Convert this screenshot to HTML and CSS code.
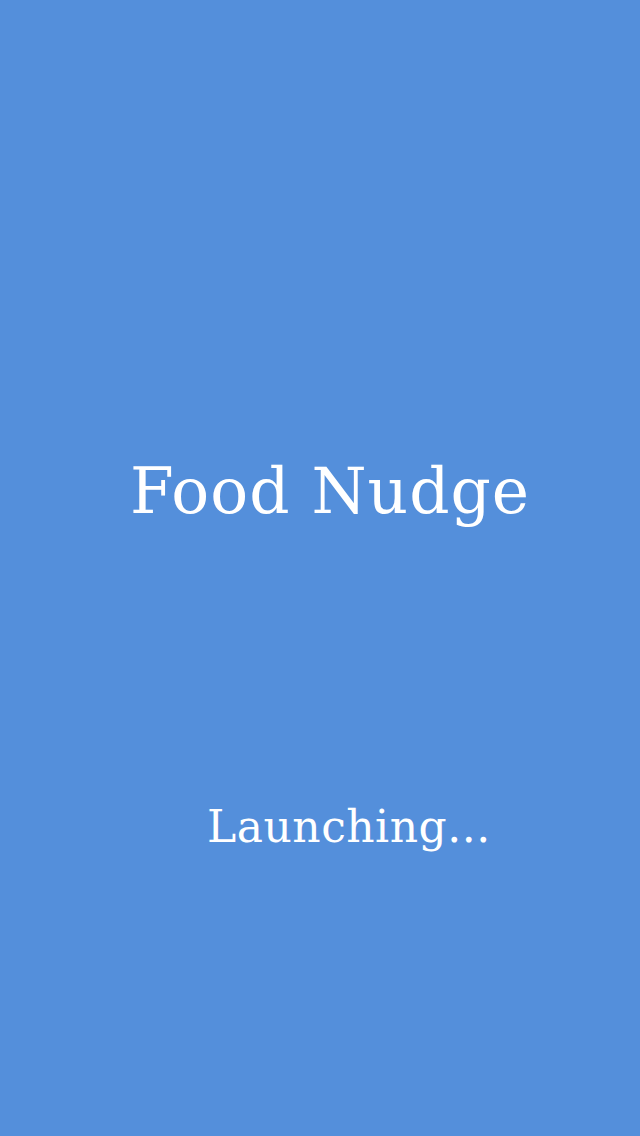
FILE: index.html
```html
<!DOCTYPE html>
<html>
<head>
<meta charset="utf-8">
<link rel="stylesheet" href="styles.css">
</head>
<body>
<main class="screen">
  <h1 class="title">Food Nudge</h1>
  <p class="status">Launching...</p>
</main>
</body>
</html>
```
FILE: styles.css
```css
html, body {
  margin: 0;
  padding: 0;
  background: #548fdb;
}
.screen {
  width: 640px;
  height: 1136px;
  display: flex;
  flex-direction: column;
  color: #ffffff;
  font-family: "DejaVu Serif", serif;
}
.title {
  margin: 457px 0 0 130px;
  font-size: 63px;
  font-weight: normal;
  letter-spacing: 1px;
  line-height: 70px;
  white-space: nowrap;
}
.status {
  margin: 275px 0 0 207px;
  font-size: 44px;
  letter-spacing: 0.5px;
  line-height: 50px;
  white-space: nowrap;
}
```
